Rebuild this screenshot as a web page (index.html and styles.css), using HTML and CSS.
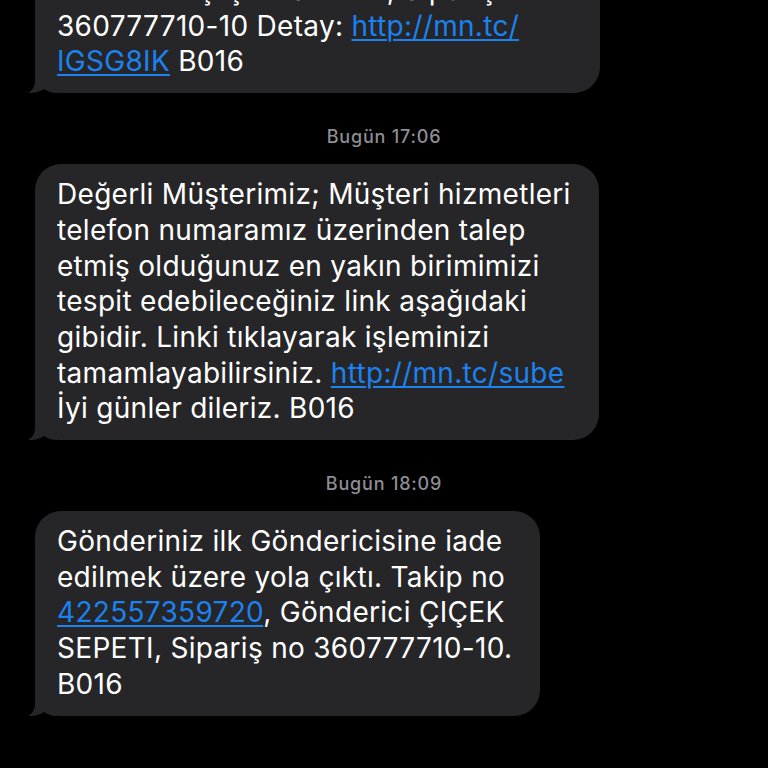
FILE: index.html
```html
<!DOCTYPE html>
<html lang="tr">
<head>
<meta charset="utf-8">
<title>Mesajlar</title>
<link rel="stylesheet" href="styles.css">
</head>
<body>
<main class="thread">
  <div class="bubble bubble--first">
    <p class="text">Gönderici ÇIÇEK SEPETI, Sipariş no<br>360777710-10 Detay: <a class="link" href="#">http://mn.tc/<br>IGSG8IK</a> B016</p>
    <svg class="tail" viewBox="0 0 30 30" width="30" height="30" aria-hidden="true"><path d="M8 0 L8 17 C8 24 5 28 1 30 C8 30.5 13 28.5 17 26 C20 28 24 30 30 30 L30 0 Z"/></svg>
  </div>

  <div class="stamp">Bugün 17:06</div>

  <div class="bubble">
    <p class="text">Değerli Müşterimiz; Müşteri hizmetleri<br>telefon numaramız üzerinden talep<br>etmiş olduğunuz en yakın birimimizi<br>tespit edebileceğiniz link aşağıdaki<br>gibidir. Linki tıklayarak işleminizi<br>tamamlayabilirsiniz. <a class="link" href="#">http://mn.tc/sube</a><br>İyi günler dileriz. B016</p>
    <svg class="tail" viewBox="0 0 30 30" width="30" height="30" aria-hidden="true"><path d="M8 0 L8 17 C8 24 5 28 1 30 C8 30.5 13 28.5 17 26 C20 28 24 30 30 30 L30 0 Z"/></svg>
  </div>

  <div class="stamp">Bugün 18:09</div>

  <div class="bubble">
    <p class="text">Gönderiniz ilk Göndericisine iade<br>edilmek üzere yola çıktı. Takip no<br><a class="link" href="#">422557359720</a>, Gönderici ÇIÇEK<br>SEPETI, Sipariş no 360777710-10.<br>B016</p>
    <svg class="tail" viewBox="0 0 30 30" width="30" height="30" aria-hidden="true"><path d="M8 0 L8 17 C8 24 5 28 1 30 C8 30.5 13 28.5 17 26 C20 28 24 30 30 30 L30 0 Z"/></svg>
  </div>
</main>
</body>
</html>
```

FILE: styles.css
```css
html, body {
  margin: 0;
  padding: 0;
  background: #000;
  height: 100%;
  overflow: hidden;
}

.thread {
  display: flex;
  flex-direction: column;
  align-items: flex-start;
  padding-left: 35px;
  font-family: Inter, "Noto Sans", sans-serif;
}

.bubble {
  position: relative;
  background: #262628;
  border-radius: 26px;
  padding: 13px 28px 13px 22px;
  box-sizing: border-box;
}

.bubble--first {
  margin-top: -40px;
  min-width: 565px;
}

.text {
  margin: 0;
  color: #fff;
  font-size: 28px;
  line-height: 35.7px;
  white-space: nowrap;
  letter-spacing: 0.3px;
}

.link {
  color: #1b82f0;
  text-decoration: underline;
  text-decoration-thickness: 2px;
  text-underline-offset: 3px;
}

.tail {
  position: absolute;
  left: -8px;
  bottom: 0;
  fill: #262628;
}

.stamp {
  align-self: center;
  margin: 34px 0 17px -35px;
  color: #8e8e93;
  font-size: 18px;
  font-weight: 500;
  letter-spacing: 0.8px;
  line-height: 20px;
  height: 20px;
}
```
